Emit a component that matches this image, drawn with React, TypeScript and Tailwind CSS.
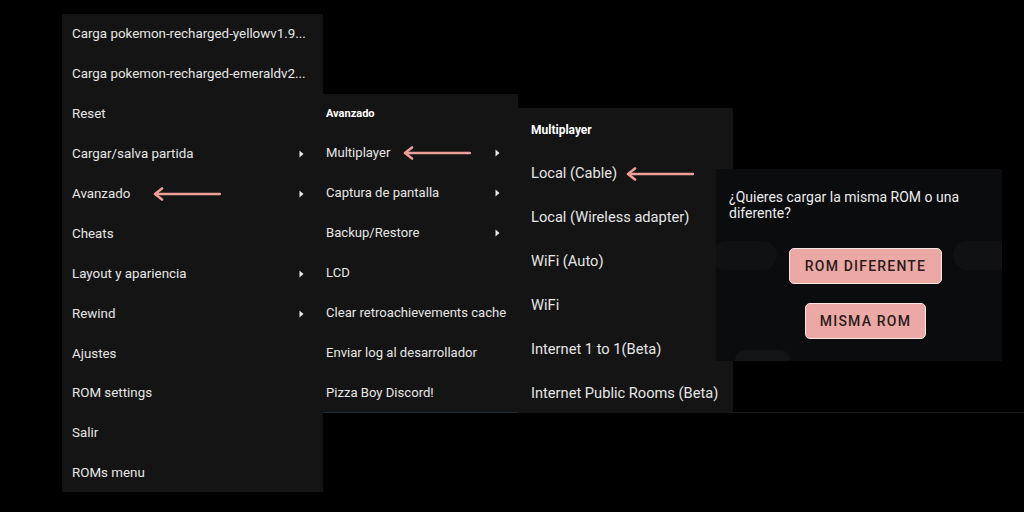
import React from 'react';

const mainItems: { label: string; sub?: boolean; arrow?: boolean }[] = [
  { label: 'Carga pokemon-recharged-yellowv1.9...' },
  { label: 'Carga pokemon-recharged-emeraldv2...' },
  { label: 'Reset' },
  { label: 'Cargar/salva partida', sub: true },
  { label: 'Avanzado', sub: true, arrow: true },
  { label: 'Cheats' },
  { label: 'Layout y apariencia', sub: true },
  { label: 'Rewind', sub: true },
  { label: 'Ajustes' },
  { label: 'ROM settings' },
  { label: 'Salir' },
  { label: 'ROMs menu' },
];

const advItems: { label: string; sub?: boolean; arrow?: boolean }[] = [
  { label: 'Multiplayer', sub: true, arrow: true },
  { label: 'Captura de pantalla', sub: true },
  { label: 'Backup/Restore', sub: true },
  { label: 'LCD' },
  { label: 'Clear retroachievements cache' },
  { label: 'Enviar log al desarrollador' },
  { label: 'Pizza Boy Discord!' },
];

const mpItems = [
  'Local (Cable)',
  'Local (Wireless adapter)',
  'WiFi (Auto)',
  'WiFi',
  'Internet 1 to 1(Beta)',
  'Internet Public Rooms (Beta)',
];

// pink hand-drawn style arrow pointing left
const PinkArrow = ({ className }: { className?: string }) => (
  <svg width="68" height="14" viewBox="0 0 68 14" className={className}>
    <line x1="4" y1="7" x2="67" y2="7" stroke="#ee9e98" strokeWidth="2.4" strokeLinecap="round" />
    <path d="M9 1.5 L2 7 L9 12.5" fill="none" stroke="#ee9e98" strokeWidth="2.6" strokeLinecap="round" strokeLinejoin="round" />
  </svg>
);

const SubTri = () => (
  <svg width="5" height="8" viewBox="0 0 5 8" className="shrink-0">
    <path d="M0.5 0.5 L4.5 4 L0.5 7.5 Z" fill="#e8e8e8" />
  </svg>
);

export default function App() {
  return (
    <div
      className="w-[1024px] h-[512px] bg-black flex items-start overflow-hidden text-[#e6e6e6]"
      style={{ fontFamily: 'Roboto, "Noto Sans", sans-serif' }}
    >
      {/* Main menu */}
      <div className="ml-[62px] mt-[14px] w-[261px] h-[478px] bg-[#141414] flex flex-col shrink-0 pt-[0.5px]">
        {mainItems.map((it) => (
          <div key={it.label} className="h-[39.9px] shrink-0 flex items-center pl-[10px] pr-[19px] text-[13.35px]">
            <span className="whitespace-nowrap">{it.label}</span>
            {it.arrow && <PinkArrow className="ml-[23px]" />}
            <div className="flex-1" />
            {it.sub && <SubTri />}
          </div>
        ))}
      </div>

      {/* Avanzado submenu */}
      <div className="mt-[94px] w-[195px] h-[319px] bg-[#141414] flex flex-col shrink-0 border-b border-[#1f2a36]">
        <div className="h-[39px] shrink-0 flex items-center pl-[3px] pt-[1px] text-[11px] font-bold text-white">Avanzado</div>
        {advItems.map((it) => (
          <div key={it.label} className="h-10 shrink-0 flex items-center pl-[3px] pr-[18px] text-[13.1px]">
            <span className="whitespace-nowrap">{it.label}</span>
            {it.arrow && <PinkArrow className="ml-[13px]" />}
            <div className="flex-1" />
            {it.sub && <SubTri />}
          </div>
        ))}
      </div>

      {/* Multiplayer submenu */}
      <div className="mt-[108px] w-[215px] h-[305px] bg-[#141414] flex flex-col shrink-0">
        <div className="h-[43px] shrink-0 flex items-center pl-[13px] pt-[1px] text-[12px] font-bold text-white">Multiplayer</div>
        {mpItems.map((label, i) => (
          <div key={label} className="h-[44px] shrink-0 flex items-center pl-[13px] pt-[2px] text-[14.65px]">
            <span className="whitespace-nowrap">{label}</span>
            {i === 0 && <PinkArrow className="ml-[9px]" />}
          </div>
        ))}
      </div>

      {/* Dialog */}
      <div className="-ml-[17px] mt-[169px] flex flex-col shrink-0 z-10">
        <div className="relative w-[286px] h-[192px] bg-[#0b0c0e] overflow-hidden">
          {/* faded game controls behind the dialog */}
          <div className="absolute left-[-4px] top-[72px] w-[65px] h-[29px] rounded-full bg-[#101113]" />
          <div className="absolute left-[237px] top-[72px] w-[60px] h-[29px] rounded-full bg-[#101113]" />
          <div className="absolute left-[19px] top-[181px] w-[55px] h-[20px] rounded-t-[10px] bg-[#131415]" />
          <div className="relative pl-[13px] pt-[20px] pr-[14px] text-[14px] leading-[16px] text-[#ececec]">
            ¿Quieres cargar la misma ROM o una diferente?
          </div>
          <div className="relative flex flex-col items-center pl-[13px] pt-[27px] gap-[19px]">
            <button className="w-[153px] h-[36px] rounded-[5px] bg-[#eca8a5] border-[1.5px] border-[#f7e6e4] text-[#2a1c1c] text-[14px] font-medium tracking-[1.2px]">
              ROM DIFERENTE
            </button>
            <button className="w-[121px] h-[36px] rounded-[5px] bg-[#eca8a5] border-[1.5px] border-[#f7e6e4] text-[#2a1c1c] text-[14px] font-medium tracking-[1.2px]">
              MISMA ROM
            </button>
          </div>
        </div>
        <div className="ml-[17px] w-[300px] h-[52px] border-r border-b border-[#16181b] bg-black" />
      </div>
    </div>
  );
}
